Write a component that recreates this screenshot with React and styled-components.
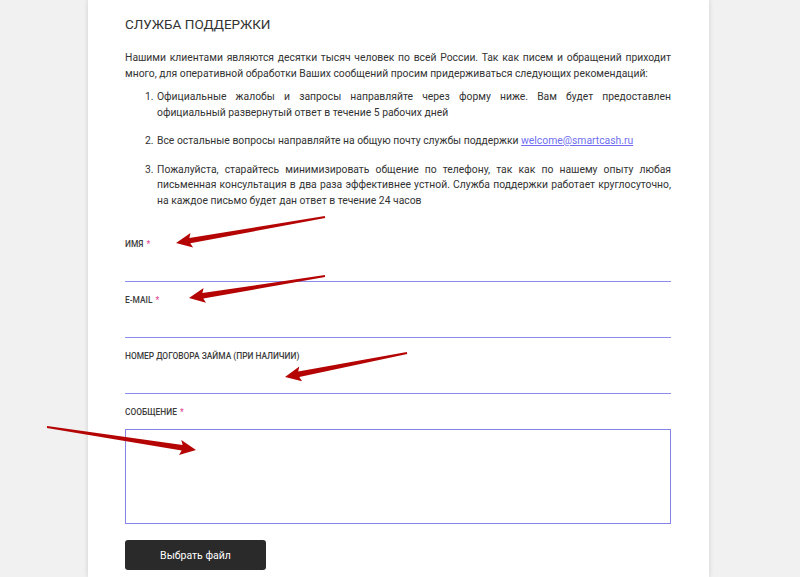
import React from "react";
import styled, { createGlobalStyle } from "styled-components";

const Global = createGlobalStyle`
  html, body { margin: 0; padding: 0; }
  body {
    background: #f1f1f1;
    font-family: Roboto, "Liberation Sans", Arial, sans-serif;
    color: #333;
    overflow: hidden;
  }
`;

const Page = styled.div`
  position: relative;
  width: 800px;
  height: 577px;
  overflow: hidden;
`;

const Panel = styled.main`
  margin-left: 88px;
  width: 621px;
  min-height: 577px;
  box-sizing: border-box;
  background: #fff;
  box-shadow: 0 0 5px rgba(0, 0, 0, 0.14);
  padding: 15px 38px 0 37px;
`;

const Title = styled.h1`
  margin: 0 0 17px;
  font-size: 13.5px;
  font-weight: 400;
  line-height: 18px;
  color: #333;
  text-transform: uppercase;
`;

const Text = styled.p`
  margin: 0 0 7px;
  font-size: 10.35px;
  line-height: 16px;
  color: #333;
  text-align: justify;
`;

const List = styled.ol`
  margin: 0 0 31px;
  padding-left: 31px;
  font-size: 10.35px;
  line-height: 15.5px;
  color: #333;
`;

const Item = styled.li`
  text-align: justify;
  margin-bottom: 13px;
  padding-left: 1px;
  &:last-child { margin-bottom: 0; }
`;

const Link = styled.a`
  color: #6f6ff0;
  text-decoration: underline;
`;

const Form = styled.form`
  display: flex;
  flex-direction: column;
`;

const Field = styled.div`
  display: flex;
  flex-direction: column;
  margin-bottom: 13px;
`;

const Label = styled.label`
  font-size: 8.4px;
  line-height: 10px;
  text-transform: uppercase;
  color: #3c3c3c;
  font-weight: 500;
`;

const Star = styled.span`
  color: #e2509a;
  margin-left: 3px;
`;

const Input = styled.input`
  height: 32px;
  border: none;
  border-bottom: 1px solid #8c8cf0;
  outline: none;
  padding: 0;
  background: transparent;
  font: inherit;
`;

const Area = styled.textarea`
  margin-top: 12px;
  height: 95px;
  box-sizing: border-box;
  border: 1px solid #8585e8;
  resize: none;
  outline: none;
  font: inherit;
`;

const FileButton = styled.button`
  margin-top: 3px;
  width: 141px;
  height: 30px;
  border: none;
  border-radius: 3px;
  background: #2a2a2a;
  color: #fff;
  font-family: Roboto, "Liberation Sans", Arial, sans-serif;
  font-size: 10.5px;
`;

const Overlay = styled.svg`
  position: absolute;
  left: 0;
  top: 0;
  pointer-events: none;
`;

function arrowPoints(tx, ty, px, py) {
  const len = Math.hypot(px - tx, py - ty);
  const dx = (px - tx) / len;
  const dy = (py - ty) / len;
  const nx = -dy;
  const ny = dx;
  const w0 = 1.8, w1 = 5.5, hl = 14, hw = 7.5;
  const bx = px - dx * hl;
  const by = py - dy * hl;
  const pts = [
    [tx + nx * w0 / 2, ty + ny * w0 / 2],
    [bx + nx * w1 / 2, by + ny * w1 / 2],
    [bx + nx * hw - dx * 2, by + ny * hw - dy * 2],
    [px, py],
    [bx - nx * hw - dx * 2, by - ny * hw - dy * 2],
    [bx - nx * w1 / 2, by - ny * w1 / 2],
    [tx - nx * w0 / 2, ty - ny * w0 / 2],
  ];
  return pts.map((p) => p.map((v) => v.toFixed(1)).join(",")).join(" ");
}

const arrows = [
  [325, 217, 176, 243],
  [325, 276, 189, 298],
  [407, 353, 285, 377],
  [47, 427, 196, 450],
];

const fields = [
  { label: "Имя", req: true },
  { label: "E-mail", req: true },
  { label: "Номер договора займа (при наличии)", req: false },
];

export default function App() {
  return (
    <Page>
      <Global />
      <Panel>
        <Title>Служба поддержки</Title>
        <Text>
          Нашими клиентами являются десятки тысяч человек по всей России. Так как писем и обращений приходит
          много, для оперативной обработки Ваших сообщений просим придерживаться следующих рекомендаций:
        </Text>
        <List>
          <Item>
            Официальные жалобы и запросы направляйте через форму ниже. Вам будет предоставлен
            официальный развернутый ответ в течение 5 рабочих дней
          </Item>
          <Item>
            Все остальные вопросы направляйте на общую почту службы поддержки{" "}
            <Link href="#">welcome@smartcash.ru</Link>
          </Item>
          <Item>
            Пожалуйста, старайтесь минимизировать общение по телефону, так как по нашему опыту любая
            письменная консультация в два раза эффективнее устной. Служба поддержки работает круглосуточно,
            на каждое письмо будет дан ответ в течение 24 часов
          </Item>
        </List>
        <Form>
          {fields.map((f) => (
            <Field key={f.label}>
              <Label>
                {f.label}
                {f.req && <Star>*</Star>}
              </Label>
              <Input type="text" />
            </Field>
          ))}
          <Field>
            <Label>
              Сообщение<Star>*</Star>
            </Label>
            <Area />
          </Field>
          <FileButton type="button">Выбрать файл</FileButton>
        </Form>
      </Panel>
      <Overlay width="800" height="577" viewBox="0 0 800 577">
        {arrows.map((a, i) => (
          <polygon key={i} points={arrowPoints(...a)} fill="#b50404" />
        ))}
      </Overlay>
    </Page>
  );
}
